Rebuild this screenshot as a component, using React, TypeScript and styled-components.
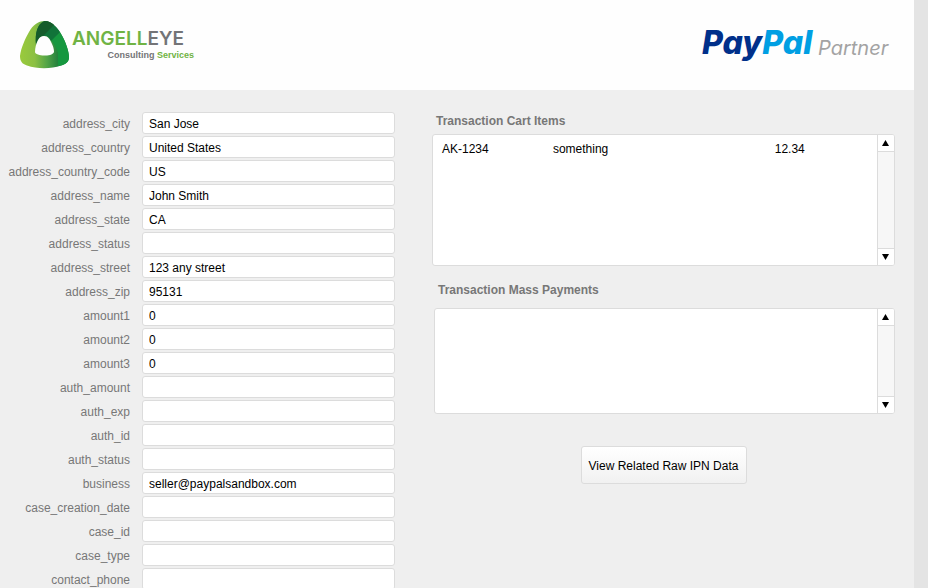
import React from "react";
import styled, { createGlobalStyle } from "styled-components";

const GlobalStyle = createGlobalStyle`
  * { box-sizing: border-box; }
  body {
    margin: 0;
    background: #e4e4e4;
    color: #000;
    font: 12px/16px "Liberation Sans", Arial, sans-serif;
  }
`;

const Page = styled.div`
  height: 100vh;
  margin-right: 14px;
  overflow: hidden;
  background: #efefef;
`;

const Header = styled.header`
  display: flex;
  justify-content: space-between;
  align-items: flex-start;
  height: 90px;
  padding: 20px 25px 0 20px;
  background: #fefefe;
`;

const Logo = styled.svg`
  display: block;
  overflow: visible;
`;

const Main = styled.main`
  display: grid;
  grid-template-columns: 395fr 463fr;
  column-gap: 37px;
  padding: 22px 19px 0 0;
`;

const Form = styled.form`
  display: flex;
  flex-direction: column;
  gap: 2px;
`;

const Field = styled.div`
  display: grid;
  grid-template-columns: 130px 1fr;
  column-gap: 12px;
`;

const Label = styled.label`
  color: #777;
  line-height: 24px;
  height: 22px;
  text-align: right;
  white-space: nowrap;
`;

const Input = styled.input`
  width: 100%;
  height: 22px;
  padding: 1px 6px 0;
  border: 1px solid #dcdcdc;
  border-radius: 3px;
  background: #fff;
  color: #000;
  font: inherit;
  outline: none;
`;

const Side = styled.div`
  display: flex;
  flex-direction: column;
`;

const Section = styled.section<{ $inset?: boolean }>`
  display: flex;
  flex-direction: column;
  gap: ${(p) => (p.$inset ? 9 : 4)}px;
  margin: ${(p) => (p.$inset ? "15px 0 0 2px" : "0")};
`;

const Title = styled.h2`
  margin: 0;
  padding-left: 4px;
  color: #777;
  font-size: 12px;
  line-height: 18px;
`;

const Portal = styled.div<{ $height: number }>`
  display: flex;
  height: ${(p) => p.$height}px;
  border: 1px solid #dcdcdc;
  border-radius: 3px;
  background: #fff;
  overflow: hidden;
`;

const PortalBody = styled.div`
  flex: 1;
  padding: 6px 0 0 9px;
`;

const Table = styled.table`
  width: 100%;
  border-collapse: collapse;
  table-layout: fixed;
`;

const Cell = styled.td<{ $width: string }>`
  width: ${(p) => p.$width};
  padding: 0;
`;

const ScrollTrack = styled.div`
  display: flex;
  flex-direction: column;
  justify-content: space-between;
  width: 17px;
  border-left: 1px solid #dcdcdc;
  background: #f7f7f7;
`;

const ScrollButton = styled.button<{ $down?: boolean }>`
  display: flex;
  align-items: center;
  justify-content: center;
  height: 17px;
  padding: 0 1px 0 0;
  border: 0 solid #dcdcdc;
  border-width: ${(p) => (p.$down ? "1px 0 0" : "0 0 1px")};
  background: #fff;
`;

const ActionButton = styled.button`
  align-self: center;
  height: 38px;
  margin-top: 32px;
  padding: 2px 6px 0;
  min-width: 166px;
  border: 1px solid #dcdcdc;
  border-radius: 3px;
  background: linear-gradient(#fff, #f1f1f1);
  color: #000;
  font: inherit;
  white-space: nowrap;
`;

const fields: [string, string][] = [
  ["address_city", "San Jose"],
  ["address_country", "United States"],
  ["address_country_code", "US"],
  ["address_name", "John Smith"],
  ["address_state", "CA"],
  ["address_status", ""],
  ["address_street", "123 any street"],
  ["address_zip", "95131"],
  ["amount1", "0"],
  ["amount2", "0"],
  ["amount3", "0"],
  ["auth_amount", ""],
  ["auth_exp", ""],
  ["auth_id", ""],
  ["auth_status", ""],
  ["business", "seller@paypalsandbox.com"],
  ["case_creation_date", ""],
  ["case_id", ""],
  ["case_type", ""],
  ["contact_phone", ""],
];

const cartItems = [{ sku: "AK-1234", name: "something", amount: "12.34" }];

function AngellEyeLogo() {
  return (
    <Logo width="176" height="50" viewBox="0 0 176 50" role="img" aria-label="AngellEYE Consulting Services">
      <defs>
        <linearGradient id="eye-body" x1="0" x2="1" y1="0" y2="0">
          <stop offset="0" stopColor="#9aca3c" />
          <stop offset="0.3" stopColor="#8cc043" />
          <stop offset="0.55" stopColor="#52a447" />
          <stop offset="0.8" stopColor="#1f7d3c" />
          <stop offset="1" stopColor="#12893f" />
        </linearGradient>
      </defs>
      <path
        fill="url(#eye-body)"
        d="M24.500 1C31 1 37 7 41 14C46 22 49 32 49 37C49 42 46 44 41 45.500C31 49 17 49 7 45.500C2 44 0 41 0 36C1 28 5 19 9 12C13 5 18 1 24.500 1Z"
      />
      <path
        fill="#16973f"
        d="M40 12C45 20 49 31 49 37C49 42 46 44 41 45.500L38 46V33C37 29 34 24 31 20Z"
      />
      <path
        fill="#117339"
        d="M24.500 1C31 1 36 6 40 12L31 21C29 17 27 16 24 16C20 16 18 20 16 25C15 13 17 5 24.500 1Z"
      />
      <path fill="#155c2b" d="M24.500 1C29 1 32 3 34 5L23 16C19 17 17 21 16 25C15 13 17 4 24.500 1Z" />
      <path
        fill="#fefefe"
        d="M24 16C28 16 30 19 32 24C34 28 34 31 34 32C33 35 28 35.500 24 35.500C20 35.500 15 34 15 32C15 28 16 24 18 20C20 17 21 16 24 16Z"
      />
      <text x="52" y="25" fill="#70b344" fontFamily="Inter, sans-serif" fontSize="19" fontWeight="600">
        ANGELL<tspan fill="#737477">EYE</tspan>
      </text>
      <text x="174" y="38" textAnchor="end" fill="#737477" fontFamily="Liberation Sans, sans-serif" fontSize="9" fontWeight="700">
        Consulting <tspan fill="#70b344">Services</tspan>
      </text>
    </Logo>
  );
}

function PayPalLogo() {
  return (
    <Logo width="187" height="46" viewBox="0 0 187 46" role="img" aria-label="PayPal Partner">
      <text x="0" y="34" fill="#00308a" fontFamily="Inter, sans-serif" fontSize="32" fontStyle="italic" fontWeight="800">
        Pay<tspan fill="#009fe3">Pal</tspan>
      </text>
      <text x="116" y="35" fill="#a3a3a3" fontFamily="Inter, sans-serif" fontSize="20" fontStyle="italic">
        Partner
      </text>
    </Logo>
  );
}

function Arrow({ down }: { down?: boolean }) {
  return (
    <svg width="7" height="6" viewBox="0 0 7 6" aria-hidden="true">
      <path d={down ? "M0 0H7L3.500 6Z" : "M0 6H7L3.500 0Z"} />
    </svg>
  );
}

function Scroller({ name }: { name: string }) {
  return (
    <ScrollTrack>
      <ScrollButton type="button" aria-label={`Scroll ${name} up`}>
        <Arrow />
      </ScrollButton>
      <ScrollButton type="button" $down aria-label={`Scroll ${name} down`}>
        <Arrow down />
      </ScrollButton>
    </ScrollTrack>
  );
}

export default function App() {
  return (
    <>
      <GlobalStyle />
      <Page>
        <Header>
          <AngellEyeLogo />
          <PayPalLogo />
        </Header>
        <Main>
          <Form>
            {fields.map(([name, value]) => (
              <Field key={name}>
                <Label htmlFor={name}>{name}</Label>
                <Input id={name} name={name} type="text" defaultValue={value} />
              </Field>
            ))}
          </Form>
          <Side>
            <Section>
              <Title>Transaction Cart Items</Title>
              <Portal $height={132}>
                <PortalBody>
                  <Table>
                    <tbody>
                      {cartItems.map((item) => (
                        <tr key={item.sku}>
                          <Cell $width="25.500%">{item.sku}</Cell>
                          <Cell $width="51%">{item.name}</Cell>
                          <Cell $width="23.500%">{item.amount}</Cell>
                        </tr>
                      ))}
                    </tbody>
                  </Table>
                </PortalBody>
                <Scroller name="cart items" />
              </Portal>
            </Section>
            <Section $inset>
              <Title>Transaction Mass Payments</Title>
              <Portal $height={106}>
                <PortalBody />
                <Scroller name="mass payments" />
              </Portal>
            </Section>
            <ActionButton type="button">View Related Raw IPN Data</ActionButton>
          </Side>
        </Main>
      </Page>
    </>
  );
}
